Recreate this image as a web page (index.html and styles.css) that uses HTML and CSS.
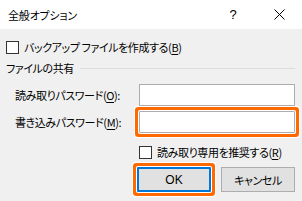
FILE: index.html
```html
<!DOCTYPE html>
<html lang="ja">
<head>
<meta charset="utf-8">
<link rel="stylesheet" href="styles.css">
</head>
<body>
<div class="dialog">
  <div class="titlebar">
    <div class="title">全般オプション</div>
    <div class="cap">?</div>
    <div class="cap close">
      <svg width="11" height="11" viewBox="0 0 11 11"><path d="M0.5 0.5L10.5 10.5M10.5 0.5L0.5 10.5" stroke="#000" stroke-width="1" fill="none"/></svg>
    </div>
  </div>
  <div class="content">
    <div class="check-row">
      <span class="box"></span>
      <span>バックアップ ファイルを作成する(<u>B</u>)</span>
    </div>
    <div class="group">ファイルの共有</div>
    <div class="pw">
      <div class="label">読み取りパスワード(<u>O</u>):</div>
      <div class="input"></div>
      <div class="label">書き込みパスワード(<u>M</u>):</div>
      <div class="input hl"></div>
      <div class="check-row rec">
        <span class="box"></span>
        <span>読み取り専用を推奨する(<u>R</u>)</span>
      </div>
    </div>
    <div class="buttons">
      <div class="btn ok">OK</div>
      <div class="btn">キャンセル</div>
    </div>
  </div>
</div>
</body>
</html>
```

FILE: styles.css
```css
html, body {
  margin: 0;
  padding: 0;
}
body {
  font-family: "Noto Sans CJK JP", "Noto Sans", sans-serif;
  font-size: 11px;
  letter-spacing: -0.4px;
  font-feature-settings: "palt";
  color: #000;
  background: #f0f0f0;
}
.dialog {
  width: 302px;
  height: 201px;
  background: #f0f0f0;
  overflow: hidden;
}
.titlebar {
  height: 29px;
  background: #fff;
  display: flex;
  align-items: center;
}
.title {
  flex: 1;
  padding-left: 8px;
  line-height: 16px;
  font-size: 11px;
  letter-spacing: -0.2px;
}
.cap {
  width: 46px;
  height: 29px;
  display: flex;
  align-items: center;
  justify-content: center;
  font-family: "Liberation Sans", sans-serif;
  font-size: 13px;
  letter-spacing: 0;
}
.content {
  padding: 10px 7px 0 6px;
}
.check-row {
  display: flex;
  align-items: center;
  height: 16px;
  line-height: 16px;
  white-space: nowrap;
}
.box {
  width: 11px;
  height: 11px;
  border: 1px solid #333;
  background: #fff;
  margin-right: 5px;
  flex: none;
}
.group {
  margin-top: 5px;
  display: flex;
  align-items: center;
  height: 16px;
  line-height: 16px;
}
.group::after {
  content: "";
  flex: 1;
  height: 1px;
  background: #dcdcdc;
  margin-left: 6px;
}
.pw {
  margin-top: 8px;
  padding-left: 9px;
  display: grid;
  grid-template-columns: 124px 1fr;
  row-gap: 5px;
  align-items: center;
}
.label {
  line-height: 16px;
  white-space: nowrap;
}
.input {
  height: 20px;
  background: #fff;
  border: 1px solid #adadad;
}
.hl {
  border-radius: 1px;
  box-shadow: 0 0 0 1px #fff, 0 0 0 4px #ff6a00, 0 0 0 5px #fff;
}
.rec {
  grid-column: 2;
  margin-top: 6px;
}
.buttons {
  margin-top: 7px;
  display: flex;
  justify-content: flex-end;
  gap: 10px;
}
.btn {
  width: 72px;
  height: 23px;
  border: 1px solid #adadad;
  background: #e1e1e1;
  display: flex;
  align-items: center;
  justify-content: center;
}
.ok {
  width: 70px;
  height: 21px;
  border: 2px solid #0078d7;
  font-family: "Liberation Sans", sans-serif;
  font-size: 12px;
  letter-spacing: 0;
  box-shadow: 0 0 0 1px #fff, 0 0 0 4px #ff6a00, 0 0 0 5px #fff;
  border-radius: 1px;
}
u {
  text-decoration-thickness: 1px;
  text-underline-offset: 2px;
}
```
